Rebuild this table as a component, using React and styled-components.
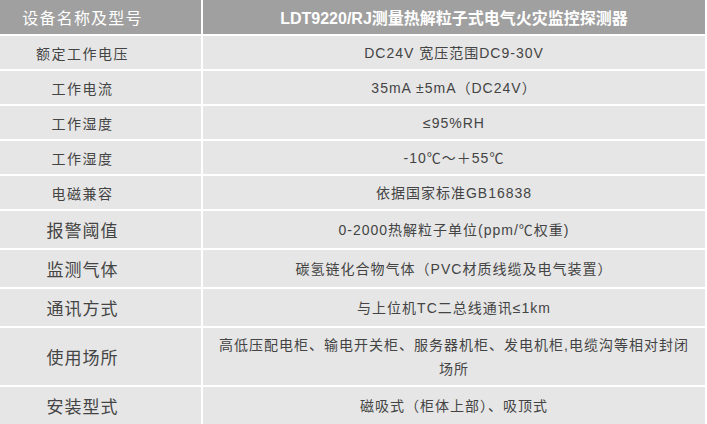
import React from 'react'
import styled, { createGlobalStyle } from 'styled-components'

const GlobalStyle = createGlobalStyle`
    html, body {
        margin: 0;
        padding: 0;
        background: #fff;
        overflow: hidden;
    }
    body {
        font-family: "Liberation Sans", "Noto Sans CJK SC", sans-serif;
    }
`

const specs = [
    { name: '额定工作电压', value: 'DC24V 宽压范围DC9-30V', h: 33 },
    { name: '工作电流', value: '35mA ±5mA（DC24V）', h: 33 },
    { name: '工作湿度', value: '≤95%RH', h: 33 },
    { name: '工作湿度', value: '-10℃～＋55℃', h: 33 },
    { name: '电磁兼容', value: '依据国家标准GB16838', h: 33 },
    { name: '报警阈值', value: '0-2000热解粒子单位(ppm/℃权重)', h: 37, big: true },
    { name: '监测气体', value: '碳氢链化合物气体（PVC材质线缆及电气装置）', h: 37, big: true },
    { name: '通讯方式', value: '与上位机TC二总线通讯≤1km', h: 37, big: true },
    { name: '使用场所', value: '高低压配电柜、输电开关柜、服务器机柜、发电机柜,电缆沟等相对封闭场所', h: 57, big: true },
    { name: '安装型式', value: '磁吸式（柜体上部）、吸顶式', h: 37, big: true },
]

const App = () => {
    return (
        <>
            <GlobalStyle />
            <Table>
                <Row h={34}>
                    <HeadCell left>设备名称及型号</HeadCell>
                    <HeadCell bold>LDT9220/RJ测量热解粒子式电气火灾监控探测器</HeadCell>
                </Row>
                {specs.map((s, i) => (
                    <Row key={i} h={s.h}>
                        <NameCell big={s.big}>{s.name}</NameCell>
                        <ValueCell>{s.value}</ValueCell>
                    </Row>
                ))}
            </Table>
        </>
    )
}

const Table = styled.div`
    width: 707px;
    height: 424px;
    overflow: hidden;
    display: flex;
    flex-direction: column;
    gap: 2px;
    background: #fff;
`

const Row = styled.div`
    display: grid;
    grid-template-columns: 201px 502px;
    column-gap: 2px;
    height: ${(p) => p.h}px;
    flex-shrink: 0;
`

const Cell = styled.div`
    display: flex;
    align-items: center;
    justify-content: center;
    text-align: center;
    background: #e6e6e6;
    color: #444;
`

const HeadCell = styled(Cell)`
    background: #a0a0a0;
    color: #fff;
    font-size: 16px;
    font-weight: ${(p) => (p.bold ? 'bold' : 'normal')};
    letter-spacing: ${(p) => (p.bold ? '0' : '1.2px')};
    padding-right: ${(p) => (p.left ? '36px' : '0')};
`

const NameCell = styled(Cell)`
    font-size: ${(p) => (p.big ? '17px' : '14px')};
    letter-spacing: ${(p) => (p.big ? '1px' : '1.5px')};
    padding-right: 36px;
`

const ValueCell = styled(Cell)`
    font-size: 14px;
    letter-spacing: 1px;
    line-height: 24px;
    padding: 0 10px;
`

export default App
